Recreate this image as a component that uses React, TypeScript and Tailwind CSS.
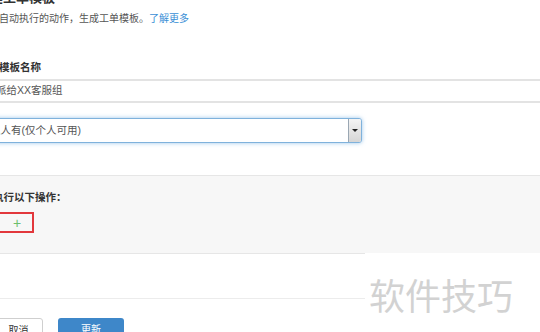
import React from "react";

const font = { fontFamily: '"Liberation Sans", "Noto Sans CJK SC", sans-serif' };

const App = () => {
  return (
    <div
      className="relative w-[540px] h-[332px] overflow-hidden bg-white text-[#333] text-[10.5px]"
      style={font}
    >
      {/* header */}
      <div className="-mt-[10px] -ml-[23px] text-[13px] font-bold leading-[16px] whitespace-nowrap">新建工单模板</div>
      <p className="mt-[5px] -ml-[1px] leading-[16px] text-[10px] text-[#555] whitespace-nowrap">
        自动执行的动作，生成工单模板。<span className="text-[#3b8fd6]">了解更多</span>
      </p>

      {/* name field */}
      <div className="mt-[32px] -ml-[1px] font-bold leading-[16px]">模板名称</div>
      <div className="mt-[4px] -ml-[6px] w-[560px] h-[24px] border-y-2 border-[#e3e3e3] flex items-center px-[2px] text-[#555]">
        派给XX客服组
      </div>

      {/* scope select */}
      <div className="mt-[15px] -ml-[13px] w-[375px] h-[25px] rounded-[3px] border border-[#7fb2dc] shadow-[0_0_4px_rgba(90,160,220,0.6)] flex items-center justify-between bg-white">
        <span className="pl-[2px] text-[#555] whitespace-nowrap">私人有(仅个人可用)</span>
        <span className="w-[13px] h-[23px] border-l border-[#9aa7b3] bg-gradient-to-b from-[#f4f4f4] to-[#d6d6d6] rounded-r-[2px] flex items-center justify-center">
          <span className="w-0 h-0 border-l-[3px] border-r-[3px] border-t-[3px] border-transparent border-t-[#222]" />
        </span>
      </div>

      {/* actions */}
      <div className="mt-[32px] h-[79px] bg-[#f7f7f7] border-y border-[#e6e6e6] -ml-[6px] pl-[2px] pt-[13px]">
        <div className="-ml-[3px] font-bold leading-[16px] whitespace-nowrap">执行以下操作：</div>
        <div className="mt-[7px] -ml-[4px] w-[42px] h-[21px] border-2 border-[#e2373c] flex items-center justify-center pl-[8px] text-[#6cbf6c] text-[14px] leading-none">
          +
        </div>
      </div>

      <div className="mt-[44px] border-t border-[#ececec]" />

      {/* buttons */}
      <div className="mt-[19px] -ml-[20px] flex gap-[15px]">
        <button className="w-[63px] h-[26px] border border-[#cfcfcf] rounded-[3px] bg-white text-[10px] text-[#333] flex items-start justify-center pt-[4px] pl-[14px]">
          取消
        </button>
        <button className="w-[66px] h-[26px] rounded-[3px] bg-[#3e87c9] text-white text-[10px] flex items-start justify-center pt-[4px]">
          更新
        </button>
      </div>

      {/* watermark */}
      <div className="absolute left-[365px] top-[253px] w-[175px] h-[79px] bg-white flex items-start justify-start pl-[4px] pt-[22px]">
        <span className="text-[36px] leading-[46px] text-[#d2d2d2] whitespace-nowrap">软件技巧</span>
      </div>
    </div>
  );
};

export default App;
